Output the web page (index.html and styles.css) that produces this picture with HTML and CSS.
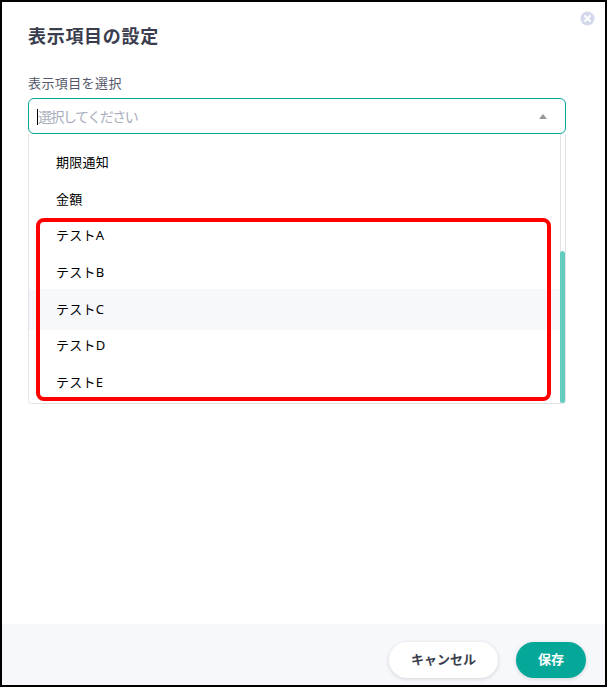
FILE: index.html
```html
<!DOCTYPE html>
<html lang="ja">
<head>
  <meta charset="UTF-8" />
  <title>表示項目の設定</title>
  <link rel="stylesheet" href="styles.css">
</head>
<body>

<div class="dialog">
  <svg class="close-icon" width="15" height="15" viewBox="0 0 15 15">
    <circle cx="7.5" cy="7.5" r="7" fill="#d3d8ea"/>
    <path d="M5 5l5 5M10 5l-5 5" stroke="#fff" stroke-width="2" stroke-linecap="round"/>
  </svg>

  <div class="content">
    <h2>表示項目の設定</h2>

    <label>表示項目を選択</label>
    <div class="select-box">
      <span class="caret"></span>
      <span class="placeholder">選択してください</span>
      <span class="arrow"></span>
    </div>

    <div class="dropdown">
      <ul class="options">
        <li>期限通知</li>
        <li>金額</li>
        <li>テストA</li>
        <li>テストB</li>
        <li class="hover">テストC</li>
        <li>テストD</li>
        <li>テストE</li>
      </ul>
      <div class="scroll-track">
        <div class="scroll-thumb"></div>
      </div>
      <!-- annotation over the list -->
      <div class="highlight"></div>
    </div>
  </div>

  <div class="footer">
    <button class="btn-cancel">キャンセル</button>
    <button class="btn-save">保存</button>
  </div>
</div>

</body>
</html>
```

FILE: styles.css
```css
* {
  box-sizing: border-box;
}

html, body {
  height: 100%;
}

body {
  margin: 0;
  background: #fff;
  font-family: "Noto Sans", "Noto Sans CJK JP", sans-serif;
  color: #3a3d4d;
}

.dialog {
  position: relative;
  display: flex;
  flex-direction: column;
  height: 687px;
  border: 2px solid #000;
  background: #fff;
}

.close-icon {
  position: absolute;
  top: 9px;
  right: 10px;
}

.content {
  flex: 1;
  padding: 23px 39px 0 26px;
}

h2 {
  margin: 0 0 26px;
  font-size: 18px;
  line-height: 22px;
  letter-spacing: 0.7px;
  font-weight: 700;
}

label {
  display: block;
  margin-bottom: 5px;
  font-size: 13px;
  line-height: 20px;
  letter-spacing: 0.4px;
  color: #55586a;
}

.select-box {
  display: flex;
  align-items: center;
  height: 36px;
  padding: 0 18px 0 8px;
  border: 1px solid #05a898;
  border-radius: 6px;
}

.caret {
  width: 1px;
  height: 16px;
  margin-top: 1px;
  background: #000;
}

.placeholder {
  flex: 1;
  font-size: 14px;
  letter-spacing: -1.5px;
  color: #a9aebd;
}

.arrow {
  width: 0;
  height: 0;
  border-left: 4px solid transparent;
  border-right: 4px solid transparent;
  border-bottom: 5px solid #999;
}

.dropdown {
  position: relative;
  display: flex;
  height: 270px;
  border: 1px solid #e3e3e6;
  border-top: none;
  border-radius: 0 0 4px 4px;
}

.options {
  flex: 1;
  margin: 0;
  padding: 9px 0 0;
  list-style: none;
}

.options li {
  display: flex;
  align-items: center;
  height: 36.7px;
  padding-left: 27px;
  font-size: 13px;
  letter-spacing: 0.25px;
  color: #000;
}

.options li.hover {
  height: 41px;
  margin: -0.8px 0 -3.5px;
  padding-bottom: 1px;
  background: #f7f8fb;
}

.scroll-track {
  display: flex;
  flex-direction: column;
  justify-content: flex-end;
  width: 5px;
  border-left: 1px solid #e3e3e6;
}

.scroll-thumb {
  width: 5px;
  height: 152px;
  margin-left: -1px;
  border-radius: 3px;
  background: #65cdc0;
}

.highlight {
  position: absolute;
  top: 84px;
  left: 7px;
  width: 515px;
  height: 183px;
  border: 4px solid #f00;
  border-radius: 8px;
}

.footer {
  display: flex;
  justify-content: flex-end;
  gap: 18px;
  height: 61px;
  padding: 16px 19px 0 0;
  background: #f7f8fb;
}

button {
  height: 36px;
  margin-top: 2px;
  padding: 0 0 3px;
  border: none;
  border-radius: 18px;
  font-family: inherit;
  font-size: 13px;
  font-weight: 700;
}

.btn-cancel {
  width: 109px;
  background: #fff;
  color: #3a3d4d;
  box-shadow: 0 1px 4px rgba(0, 0, 0, 0.15);
}

.btn-save {
  width: 70px;
  background: #05a898;
  color: #fff;
  box-shadow: 0 1px 4px rgba(0, 0, 0, 0.15);
}
```
